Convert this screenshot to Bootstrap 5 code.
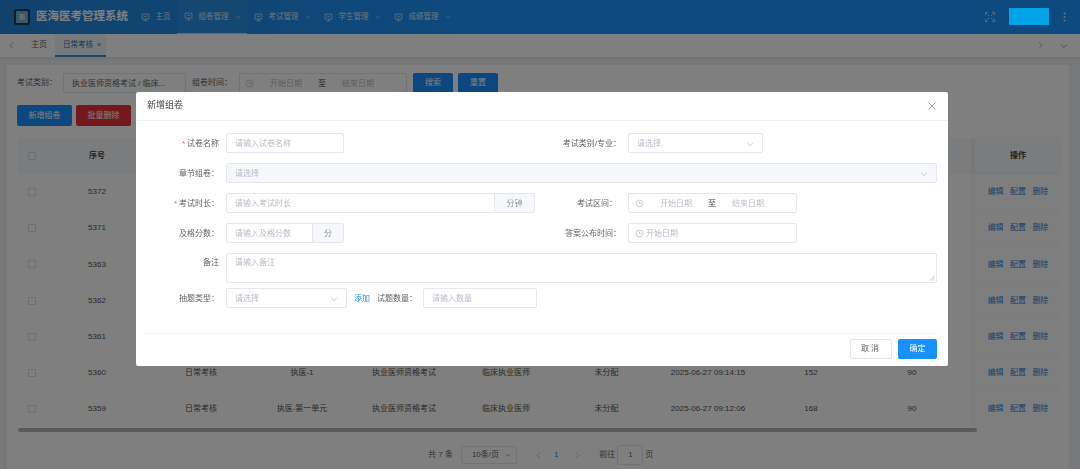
<!DOCTYPE html>
<html lang="zh-CN">
<head>
    <meta charset="UTF-8">
    <title>医海医考管理系统</title>
    <link rel="stylesheet" href="https://cdn.jsdelivr.net/npm/bootstrap@5.3.0/dist/css/bootstrap.min.css">
    <style>
        html, body { height: 469px; overflow: hidden; }
        body { font-family: "Liberation Sans", "Noto Sans CJK SC", sans-serif; font-size: 8px; color: #555; background: #eef1f4; }
        svg { display: block; flex: none; }

        /* top bar */
        .top-bar { height: 34px; background: linear-gradient(90deg, #2384d8, #1b95ff 45%); color: #fff; padding-left: 14px; }
        .logo-box { width: 16px; height: 16px; border-radius: 2px; background: #1a3f5e; margin-right: 6px; }
        .sys-name { font-size: 11.5px; font-weight: 700; width: 103px; }
        .top-item { height: 34px; padding: 0 6.5px; gap: 6px; color: #dce8f4; white-space: nowrap; font-size: 7.5px; }
        .top-item.on { border-bottom: 1px solid #c8d4e0; background: #2a8ee6; }
        .item-first { margin-left: -5px; }
        .top-tools { margin-left: auto; gap: 14px; padding-right: 14px; }
        .cover-box { position: relative; z-index: 1060; width: 40px; height: 17px; background: #00a2e8; margin-top: -1px; }

        /* tabs */
        .tab-bar { height: 23px; background: #fff; padding: 0 8px; box-shadow: 0 2px 3px rgba(0, 0, 0, .06); color: #666; position: relative; }
        .tab-item { height: 23px; line-height: 22px; padding: 0 8px; }
        .tab-item.on { color: #1a6fb5; background: #eef5fa; border-bottom: 2px solid #3a8ed0; padding: 0 5px 0 8px; font-size: 7.5px; }

        /* page panel */
        .page-wrap { padding: 8px 11px 0 7px; }
        .panel-box { background: #fff; height: 412px; padding: 8px 0 0 10px; }
        .fake-input { height: 20px; border: 1px solid #e4e7ed; border-radius: 2px; background: #fff; color: #b8bcc4; padding: 1px 8px 0; white-space: nowrap; overflow: hidden; flex: none; }
        .flt-label { color: #606266; white-space: nowrap; }
        .flt-select { width: 123px; margin-left: 6px; color: #606266; }
        .flt-label.second { margin-left: 6px; }
        .flt-date { width: 168px; margin-left: 7px; padding-left: 5px; }
        .btn-mini { font-size: 8px; border-radius: 2px; height: 21px; padding: 0; line-height: 1; color: #fff; border: 0; }
        .btn-blue { background: #1890ff; }
        .btn-red { background: #e6323c; }
        .btn-sm40 { width: 40px; height: 20px; margin-left: 6px; }
        .btn-sm40.next { margin-left: 5px; }
        .btn-sm55 { width: 55px; }

        /* table */
        .data-wrap { position: relative; margin: 12px 0 0 1px; width: 1043px; }
        .data-table { table-layout: fixed; width: 1043px; margin: 0; font-size: 8px; }
        .data-table > * > tr > * { height: 36.17px; padding: 0; text-align: center; vertical-align: middle; border: 0; color: #555; background: transparent; box-shadow: none; white-space: nowrap; }
        .data-table th { font-weight: 700; background: #f7f8fa !important; color: #444; }
        .chk-box { display: inline-block; width: 8px; height: 8px; border: 1px solid #dcdfe6; border-radius: 1px; vertical-align: middle; }
        .data-table .fix-col { background: #fdfdfd; box-shadow: -3px 0 4px rgba(0, 0, 0, .05); }
        .act-link { color: #2f7fd8; margin: 0 3.2px; text-decoration: none; }
        .h-scroll { height: 4px; width: 959px; background: #b5b5b5; border-radius: 2px; margin-top: 1px; }
        .pager-bar { margin-top: 12px; height: 22px; gap: 8px; color: #666; margin-left: 411px; }
        .pager-size { width: 56px; height: 18px; border: 1px solid #e4e7ed; border-radius: 2px; padding: 0 5px 0 10px; margin-right: 10px; }
        .pager-num { color: #1890ff; margin: 0 8px 0 4px; }
        .pager-go { margin-left: 10px; }
        .pager-jump { width: 26px; height: 20px; border: 1px solid #e4e7ed; border-radius: 2px; text-align: center; line-height: 18px; margin: 0 -6px; }

        /* dialog */
        .modal-dialog.dlg-box { width: 812px; max-width: 812px; margin: 92px 0 0 136px; }
        .dlg-box .modal-content { border: 0; border-radius: 2px; height: 274px; color: #606266; font-size: 8px; }
        .dlg-box .modal-header { height: 29px; padding: 0 12px 0 11px; border-bottom: 1px solid #f0f0f0; }
        .dlg-title { font-size: 9px; color: #444; }
        .dlg-body { padding: 12px 11px 0 0; height: 212px; }
        .form-line { display: flex; align-items: center; height: 20px; margin-bottom: 10px; }
        .form-line.tight { height: 30px; margin-bottom: 5px; }
        .lbl-left { width: 83px; text-align: right; margin-right: 7px; padding-top: 1px; flex: none; color: #606266; }
        .lbl-right { width: 124px; text-align: right; margin-right: 7px; padding-top: 1px; flex: none; color: #606266; }
        .lbl-right.short-gap { width: 82px; margin-right: 11px; }
        .half-left { width: 361px; display: flex; align-items: center; flex: none; }
        .half-left.wide { width: 399px; }
        .req-mark { color: #f56c6c; margin-right: 2px; }
        .w-118 { width: 118px; }
        .w-135 { width: 135px; }
        .w-169 { width: 169px; padding-left: 6px; }
        .w-309 { width: 309px; }
        .w-121 { width: 121px; }
        .w-114 { width: 114px; margin-left: 6px; }
        .w-711 { width: 711px; }
        .is-off { background: #f5f7fa; }
        .add-tail { margin: -1px -8px 0 auto; width: 40px; height: 18px; background: #f5f7fa; border-left: 1px solid #e4e7ed; color: #909399; padding-top: 1px; }
        .add-tail.slim { width: 31px; }
        .fake-area { height: 30px; padding-top: 3px; position: relative; }
        .grip-mark { position: absolute; right: 1px; bottom: 1px; }
        .lbl-top { align-self: flex-start; padding-top: 4px; }
        .link-add { color: #1890ff; margin: 1px 7px 0 7px; text-decoration: none; }
        .qty-label { padding-top: 1px; }
        .dlg-foot { border-top: 1px solid #f2f2f2; margin: 0 11px 0 8px; height: 33px; gap: 6px; justify-content: flex-end; padding-top: 5px; }
        .btn-cancel { width: 42px; height: 20px; background: #fff; border: 1px solid #e4e7ed; color: #606266; font-size: 8px; padding: 0; border-radius: 2px; letter-spacing: 2px; }
        .btn-ok { width: 39px; height: 20px; background: #1890ff; color: #fff; border: 0; font-size: 8px; padding: 0; border-radius: 2px; }
        .range-sep { color: #333; margin: 0 16px; }
        .range-txt { margin-left: 16px; }
        .one-date { margin-left: 2px; }
    </style>
</head>
<body>
    <svg width="0" height="0" class="position-absolute">
        <symbol id="ic-monitor" viewBox="0 0 12 12"><path d="M1.500 1.500h9v6.500h-9zM6 8v2.500M3.500 10.500h5M4 4.500h4" fill="none" stroke="currentColor" stroke-width="1"/></symbol>
        <symbol id="ic-down" viewBox="0 0 10 10"><path d="M1.500 3.500 5 7l3.500-3.500" fill="none" stroke="currentColor" stroke-width="1"/></symbol>
        <symbol id="ic-clock" viewBox="0 0 10 10"><circle cx="5" cy="5" r="3.800" fill="none" stroke="currentColor" stroke-width=".8"/><path d="M5 2.800V5h2" fill="none" stroke="currentColor" stroke-width=".8"/></symbol>
    </svg>

    <header class="top-bar d-flex align-items-center">
        <div class="logo-box d-flex align-items-center justify-content-center">
            <svg width="12" height="12" viewBox="0 0 12 12"><rect width="12" height="12" rx="1" fill="#6fb0d0"/><path d="M3 4h6M3 6h6M3 8h6M6 3v6" stroke="#e6f2f8" stroke-width=".9"/></svg>
        </div>
        <div class="sys-name">医海医考管理系统</div>
        <div class="top-item item-first d-flex align-items-center"><svg width="9" height="9"><use href="#ic-monitor"/></svg>主页</div>
        <div class="top-item on d-flex align-items-center"><svg width="9" height="9"><use href="#ic-monitor"/></svg>组卷管理<svg width="6" height="6"><use href="#ic-down"/></svg></div>
        <div class="top-item d-flex align-items-center"><svg width="9" height="9"><use href="#ic-monitor"/></svg>考试管理<svg width="6" height="6"><use href="#ic-down"/></svg></div>
        <div class="top-item d-flex align-items-center"><svg width="9" height="9"><use href="#ic-monitor"/></svg>学生管理<svg width="6" height="6"><use href="#ic-down"/></svg></div>
        <div class="top-item d-flex align-items-center"><svg width="9" height="9"><use href="#ic-monitor"/></svg>成绩管理<svg width="6" height="6"><use href="#ic-down"/></svg></div>
        <div class="top-tools d-flex align-items-center">
            <svg width="10" height="10" viewBox="0 0 10 10"><path d="M.5 3V.5H3M7 .5h2.500V3M9.500 7v2.500H7M3 9.500H.5V7M2 2l2 2M8 2 6 4M2 8l2-2M8 8 6 6" fill="none" stroke="#dce8f4" stroke-width=".8"/></svg>
            <div class="cover-box"></div>
            <svg width="3" height="10" viewBox="0 0 3 10"><circle cx="1.500" cy="1.500" r="1" fill="#dce8f4"/><circle cx="1.500" cy="5" r="1" fill="#dce8f4"/><circle cx="1.500" cy="8.500" r="1" fill="#dce8f4"/></svg>
        </div>
    </header>

    <div class="tab-bar d-flex align-items-center">
        <svg width="7" height="7" viewBox="0 0 10 10" class="me-2"><path d="M7 1 3 5l4 4" fill="none" stroke="#888" stroke-width="1"/></svg>
        <div class="tab-item">主页</div>
        <div class="tab-item on d-flex align-items-center gap-1">日常考核 <span>×</span></div>
        <svg width="7" height="7" viewBox="0 0 10 10" class="ms-auto me-3"><path d="M3 1l4 4-4 4" fill="none" stroke="#888" stroke-width="1"/></svg>
        <svg width="8" height="8" class="me-1" style="color:#888"><use href="#ic-down"/></svg>
    </div>

    <main class="page-wrap">
        <section class="panel-box">
            <div class="d-flex align-items-center">
                <span class="flt-label">考试类别：</span>
                <div class="fake-input flt-select d-flex align-items-center">执业医师资格考试 / 临床...</div>
                <span class="flt-label second">组卷时间：</span>
                <div class="fake-input flt-date d-flex align-items-center">
                    <svg width="9" height="9"><use href="#ic-clock"/></svg><span class="range-txt">开始日期</span><span class="range-sep">至</span><span>结束日期</span>
                </div>
                <button class="btn btn-mini btn-blue btn-sm40" type="button">搜索</button>
                <button class="btn btn-mini btn-blue btn-sm40 next" type="button">重置</button>
            </div>
            <div class="d-flex gap-1 mt-2 pt-1">
                <button class="btn btn-mini btn-blue btn-sm55" type="button">新增组卷</button>
                <button class="btn btn-mini btn-red btn-sm55" type="button">批量删除</button>
            </div>
            <div class="data-wrap">
                <table class="table data-table">
                    <colgroup>
                        <col style="width:28px"><col style="width:102px"><col style="width:106px"><col style="width:96px"><col style="width:108px"><col style="width:96px"><col style="width:105px"><col style="width:98px"><col style="width:108px"><col style="width:94px"><col style="width:16px"><col style="width:86px">
                    </colgroup>
                    <thead>
                        <tr><th><span class="chk-box"></span></th><th>序号</th><th colspan="9"></th><th class="fix-col">操作</th></tr>
                    </thead>
                    <tbody>
                        <tr><td><span class="chk-box"></span></td><td>5372</td><td colspan="9"></td><td class="fix-col"><a class="act-link" href="#">编辑</a><a class="act-link" href="#">配置</a><a class="act-link" href="#">删除</a></td></tr>
                        <tr><td><span class="chk-box"></span></td><td>5371</td><td colspan="9"></td><td class="fix-col"><a class="act-link" href="#">编辑</a><a class="act-link" href="#">配置</a><a class="act-link" href="#">删除</a></td></tr>
                        <tr><td><span class="chk-box"></span></td><td>5363</td><td colspan="9"></td><td class="fix-col"><a class="act-link" href="#">编辑</a><a class="act-link" href="#">配置</a><a class="act-link" href="#">删除</a></td></tr>
                        <tr><td><span class="chk-box"></span></td><td>5362</td><td colspan="9"></td><td class="fix-col"><a class="act-link" href="#">编辑</a><a class="act-link" href="#">配置</a><a class="act-link" href="#">删除</a></td></tr>
                        <tr><td><span class="chk-box"></span></td><td>5361</td><td colspan="9"></td><td class="fix-col"><a class="act-link" href="#">编辑</a><a class="act-link" href="#">配置</a><a class="act-link" href="#">删除</a></td></tr>
                        <tr><td><span class="chk-box"></span></td><td>5360</td><td>日常考核</td><td>执医-1</td><td>执业医师资格考试</td><td>临床执业医师</td><td>未分配</td><td>2025-06-27 09:14:15</td><td>152</td><td>90</td><td></td><td class="fix-col"><a class="act-link" href="#">编辑</a><a class="act-link" href="#">配置</a><a class="act-link" href="#">删除</a></td></tr>
                        <tr><td><span class="chk-box"></span></td><td>5359</td><td>日常考核</td><td>执医-第一单元</td><td>执业医师资格考试</td><td>临床执业医师</td><td>未分配</td><td>2025-06-27 09:12:06</td><td>168</td><td>90</td><td></td><td class="fix-col"><a class="act-link" href="#">编辑</a><a class="act-link" href="#">配置</a><a class="act-link" href="#">删除</a></td></tr>
                    </tbody>
                </table>
                <div class="h-scroll"></div>
            </div>
            <div class="pager-bar d-flex align-items-center">
                <span>共 7 条</span>
                <div class="pager-size d-flex align-items-center justify-content-between">10条/页<svg width="6" height="6"><use href="#ic-down"/></svg></div>
                <svg width="7" height="7" viewBox="0 0 10 10"><path d="M7 1 3 5l4 4" fill="none" stroke="#aaa" stroke-width="1"/></svg>
                <span class="pager-num">1</span>
                <svg width="7" height="7" viewBox="0 0 10 10"><path d="M3 1l4 4-4 4" fill="none" stroke="#aaa" stroke-width="1"/></svg>
                <span class="pager-go">前往</span>
                <div class="pager-jump">1</div>
                <span>页</span>
            </div>
        </section>
    </main>

    <div class="modal-backdrop fade show"></div>
    <div class="modal d-block" tabindex="-1">
        <div class="modal-dialog dlg-box">
            <div class="modal-content">
                <div class="modal-header">
                    <span class="dlg-title">新增组卷</span>
                    <svg width="8" height="8" viewBox="0 0 8 8" class="ms-auto"><path d="M.5.5l7 7M7.500.5l-7 7" stroke="#888" stroke-width=".8"/></svg>
                </div>
                <div class="dlg-body">
                    <div class="form-line">
                        <div class="half-left">
                            <span class="lbl-left"><span class="req-mark">*</span>试卷名称</span>
                            <div class="fake-input d-flex align-items-center w-118">请输入试卷名称</div>
                        </div>
                        <span class="lbl-right">考试类别/专业：</span>
                        <div class="fake-input d-flex align-items-center justify-content-between w-135">请选择<svg width="8" height="8"><use href="#ic-down"/></svg></div>
                    </div>
                    <div class="form-line">
                        <span class="lbl-left">章节组卷：</span>
                        <div class="fake-input is-off d-flex align-items-center justify-content-between w-711">请选择<svg width="8" height="8"><use href="#ic-down"/></svg></div>
                    </div>
                    <div class="form-line">
                        <div class="half-left wide">
                            <span class="lbl-left"><span class="req-mark">*</span>考试时长：</span>
                            <div class="fake-input d-flex align-items-center w-309">请输入考试时长<span class="add-tail d-flex align-items-center justify-content-center">分钟</span></div>
                        </div>
                        <span class="lbl-right short-gap">考试区间：</span>
                        <div class="fake-input d-flex align-items-center w-169"><svg width="9" height="9"><use href="#ic-clock"/></svg><span class="range-txt">开始日期</span><span class="range-sep">至</span><span>结束日期</span></div>
                    </div>
                    <div class="form-line">
                        <div class="half-left">
                            <span class="lbl-left">及格分数：</span>
                            <div class="fake-input d-flex align-items-center w-118">请输入及格分数<span class="add-tail slim d-flex align-items-center justify-content-center">分</span></div>
                        </div>
                        <span class="lbl-right">答案公布时间：</span>
                        <div class="fake-input d-flex align-items-center w-169"><svg width="9" height="9"><use href="#ic-clock"/></svg><span class="one-date">开始日期</span></div>
                    </div>
                    <div class="form-line tight">
                        <span class="lbl-left lbl-top">备注</span>
                        <div class="fake-input fake-area w-711">请输入备注
                            <svg class="grip-mark" width="6" height="6" viewBox="0 0 6 6"><path d="M1 5.500 5.500 1M3.500 5.500l2-2" stroke="#999" stroke-width=".6"/></svg>
                        </div>
                    </div>
                    <div class="form-line">
                        <span class="lbl-left">抽题类型：</span>
                        <div class="fake-input d-flex align-items-center justify-content-between w-121">请选择<svg width="8" height="8"><use href="#ic-down"/></svg></div>
                        <a class="link-add" href="#">添加</a>
                        <span class="qty-label">试题数量：</span>
                        <div class="fake-input d-flex align-items-center w-114">请输入数量</div>
                    </div>
                </div>
                <div class="dlg-foot d-flex">
                    <button class="btn btn-cancel" type="button">取消</button>
                    <button class="btn btn-ok" type="button">确定</button>
                </div>
            </div>
        </div>
    </div>
    <script src="https://cdn.jsdelivr.net/npm/bootstrap@5.3.0/dist/js/bootstrap.bundle.min.js"></script>
</body>
</html>
